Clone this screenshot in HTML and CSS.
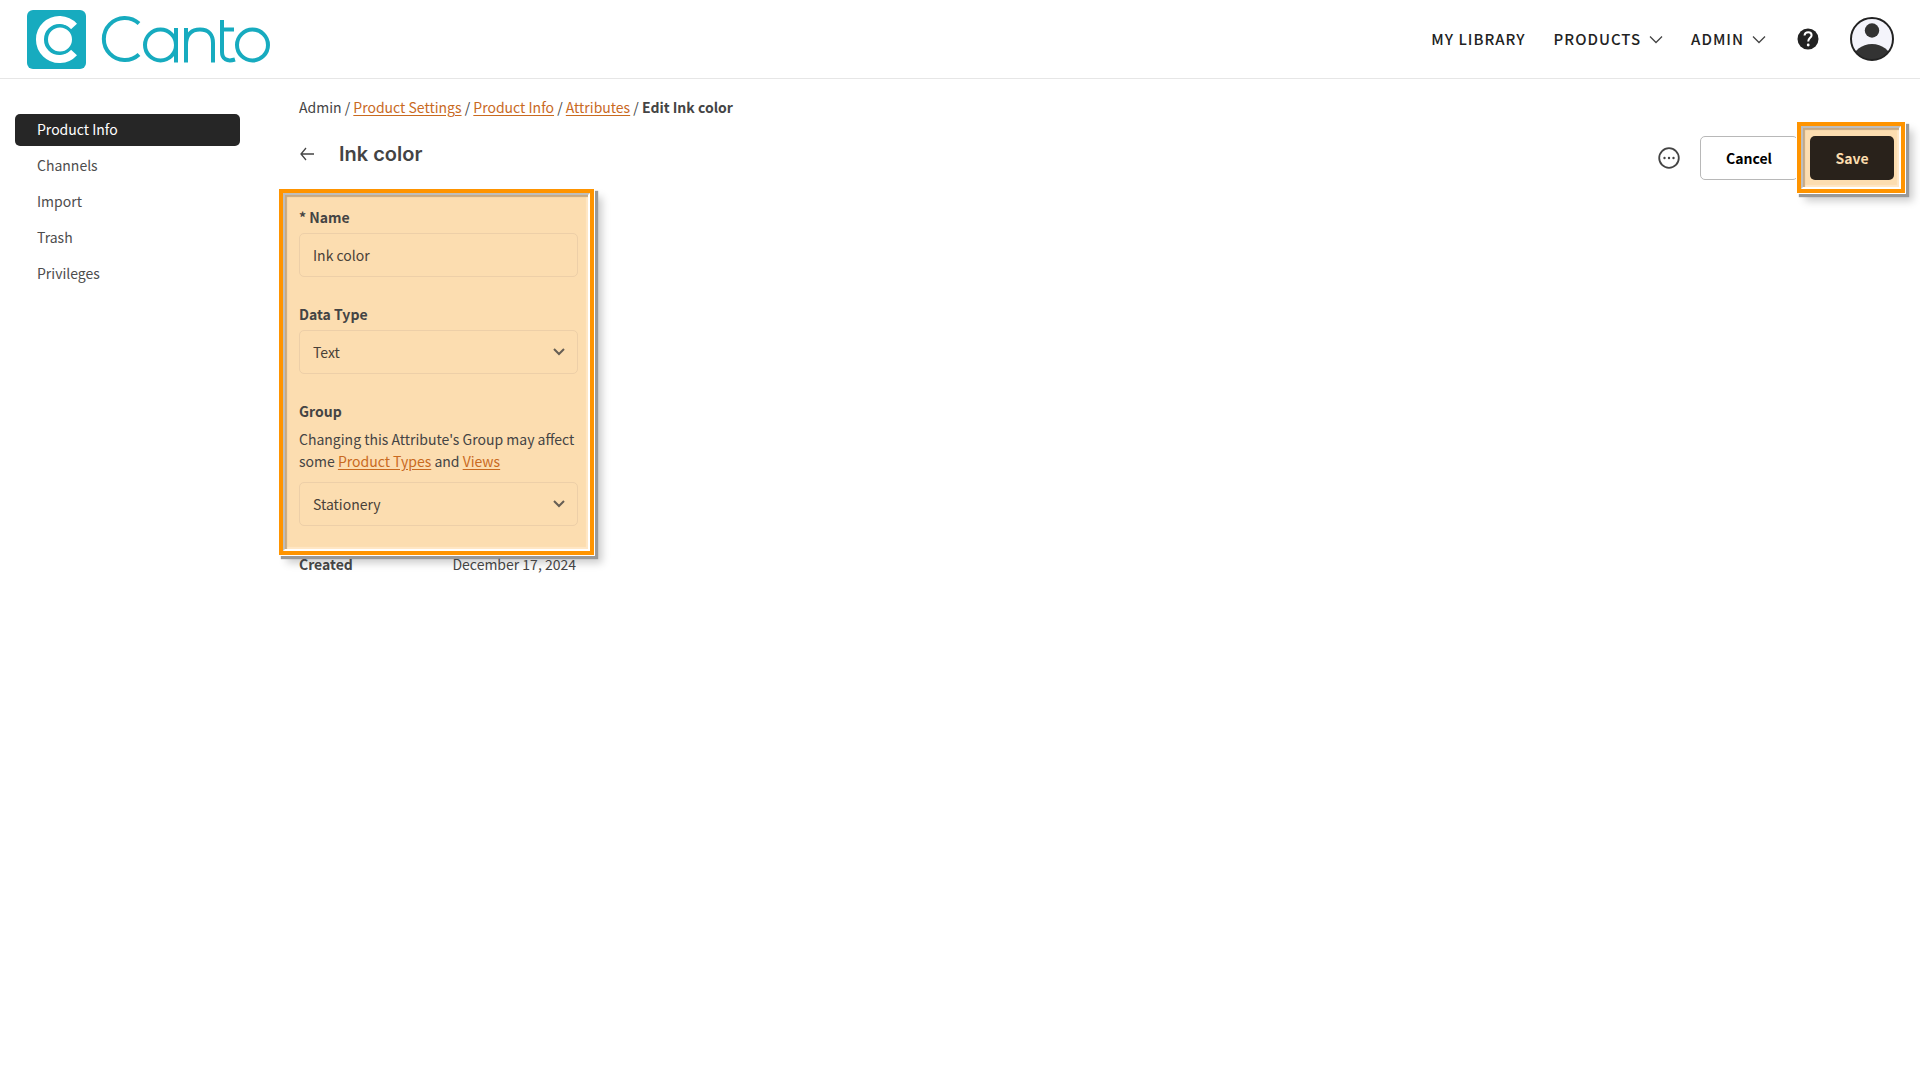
FILE: index.html
```html
<!DOCTYPE html>
<html lang="en">
<head>
<meta charset="utf-8">
<meta name="viewport" content="width=device-width, initial-scale=1">
<title>Edit Ink color</title>
<link rel="stylesheet" href="styles.css">
</head>
<body>
<header class="topbar">
  <a class="logo" href="#" aria-label="Canto home">
    <svg width="244" height="60" viewBox="26 9 244 60" fill="none" aria-hidden="true">
      <rect x="27" y="10" width="59" height="59" rx="6" fill="#17abbf"/>
      <path d="M74 26.500A19.500 19.500 0 1 0 74 52.500" stroke="#fff" stroke-width="8"/>
      <circle cx="60" cy="39.500" r="13.500" fill="#fff" stroke="#17abbf" stroke-width="3"/>
      <g stroke="#17abbf" stroke-width="4">
        <path d="M139 23.500A21 21 0 1 0 139 54.500"/>
        <circle cx="160.500" cy="45" r="15.500"/>
        <path d="M176 28V62.500M186 62.500V28M186 45C186 34 192 29.500 200 29.500C209 29.500 213 35 213 43V62.500M222 20V52C222 59 227 62 235 59.500M222 29.500H234"/>
        <circle cx="252.500" cy="45" r="15.500"/>
      </g>
    </svg>
  </a>
  <nav class="topnav" aria-label="Main">
    <a href="#">MY LIBRARY</a>
    <a href="#">PRODUCTS <svg width="14" height="9" viewBox="0 0 14 9" aria-hidden="true"><path d="M1 1.500L7 7.500L13 1.500"/></svg></a>
    <a href="#">ADMIN <svg width="14" height="9" viewBox="0 0 14 9" aria-hidden="true"><path d="M1 1.500L7 7.500L13 1.500"/></svg></a>
  </nav>
  <button class="icon-button help" type="button" aria-label="Help">
    <svg width="22" height="22" viewBox="0 0 22 22" fill="none" aria-hidden="true">
      <circle cx="11" cy="11" r="10.500" fill="#222"/>
      <path d="M7.500 7.500C7.800 5 9.300 4.200 11.200 4.200C13.300 4.200 14.600 5.400 14.600 7.200C14.600 9.800 11.200 10 11.200 13.500" stroke="#fff" stroke-width="2"/>
      <circle cx="11.200" cy="17" r="1.400" fill="#fff"/>
    </svg>
  </button>
  <button class="icon-button" type="button" aria-label="Account">
    <svg width="44" height="44" viewBox="0 0 44 44" aria-hidden="true">
      <clipPath id="face"><circle cx="22" cy="22" r="21"/></clipPath>
      <circle cx="22" cy="22" r="21" fill="#f4f4fb"/>
      <g clip-path="url(#face)" fill="#333"><circle cx="22" cy="13.500" r="7.200"/><ellipse cx="22" cy="42" rx="19" ry="15"/></g>
      <circle cx="22" cy="22" r="21" fill="none" stroke="#222" stroke-width="2"/>
    </svg>
  </button>
</header>
<div class="layout">
  <nav class="sidebar" aria-label="Settings">
    <a class="active" href="#" aria-current="page">Product Info</a>
    <a href="#">Channels</a>
    <a href="#">Import</a>
    <a href="#">Trash</a>
    <a href="#">Privileges</a>
  </nav>
  <main class="content">
    <nav class="breadcrumb" aria-label="Breadcrumb">Admin / <a href="#">Product Settings</a> / <a href="#">Product Info</a> / <a href="#">Attributes</a> / <strong>Edit Ink color</strong></nav>
    <div class="page-head">
      <a class="back" href="#" aria-label="Back"><svg width="16" height="14" viewBox="0 0 16 14" aria-hidden="true"><path d="M15 7H2M7 1L2 7L7 13"/></svg></a>
      <h1>Ink color</h1>
      <div class="actions">
        <button class="icon-button" type="button" aria-label="More options">
          <svg width="22" height="22" viewBox="0 0 22 22" aria-hidden="true"><circle cx="11" cy="11" r="9.800" fill="none" stroke="#444" stroke-width="1.800"/><g fill="#444"><circle cx="6.500" cy="11" r="1.200"/><circle cx="11" cy="11" r="1.200"/><circle cx="15.500" cy="11" r="1.200"/></g></svg>
        </button>
        <button class="button cancel" type="button">Cancel</button>
        <div class="highlight save-frame"><div class="bevel"><button class="button save" type="submit" form="attribute">Save</button></div></div>
      </div>
    </div>
    <div class="highlight form-frame">
      <form class="bevel" id="attribute">
        <div class="field">
          <label for="name">* Name</label>
          <input class="control" id="name" type="text" value="Ink color">
        </div>
        <div class="field">
          <label for="type">Data Type</label>
          <div class="select"><select class="control" id="type"><option>Text</option></select><svg width="12" height="8" viewBox="0 0 12 8" aria-hidden="true"><path d="M1 1L6 6L11 1"/></svg></div>
        </div>
        <div class="field">
          <label for="group">Group</label>
          <p>Changing this Attribute's Group may affect some <a href="#">Product Types</a> and <a href="#">Views</a></p>
          <div class="select"><select class="control" id="group"><option>Stationery</option></select><svg width="12" height="8" viewBox="0 0 12 8" aria-hidden="true"><path d="M1 1L6 6L11 1"/></svg></div>
        </div>
      </form>
    </div>
    <dl class="meta"><dt>Created</dt><dd>December 17, 2024</dd></dl>
  </main>
</div>
</body>
</html>
```
FILE: styles.css
```css
* { box-sizing: border-box; }
body {
  margin: 0;
  background: #fff;
  color: #444;
  font: 14px/22px "Noto Sans CJK SC", "Open Sans", sans-serif;
}
a { color: #c96a1f; text-underline-offset: 2px; }
svg { display: block; }
button, input, select { font: inherit; }
.topbar {
  display: flex;
  align-items: center;
  height: 79px;
  padding: 0 26px;
  border-bottom: 1px solid #e6e6e6;
}
.topnav {
  display: flex;
  gap: 28px;
  margin-left: auto;
  font-size: 15px;
  font-weight: 500;
  letter-spacing: 1px;
}
.topnav a {
  display: flex;
  align-items: center;
  gap: 8px;
  color: #222;
  text-decoration: none;
}
.topnav path, .back path { fill: none; stroke: #444; stroke-width: 1.300; }
.icon-button { padding: 0; border: 0; background: none; }
.help { margin: 0 31px; }
.layout { display: flex; }
.sidebar {
  display: flex;
  flex-direction: column;
  gap: 4px;
  width: 240px;
  padding: 35px 0 0 15px;
}
.sidebar a {
  padding: 4px 22px 6px;
  border-radius: 5px;
  color: #4d4d4d;
  text-decoration: none;
}
.sidebar .active { background: #262626; color: #fff; }
.content { flex: 1; padding: 17px 15px 0 59px; }
.page-head { display: flex; align-items: flex-start; margin-top: 4px; }
.back { padding: 25px 0; }
h1 {
  margin: 18px 0 0 24px;
  font: 600 20px/28px Inter, sans-serif;
}
.actions { display: flex; align-items: center; margin-left: auto; }
.highlight {
  position: relative;
  border: 4px solid #ff9400;
  background: #fcddb0;
  box-shadow: 0 0 0 1px #fff, 3px 3px 1px 1px #999, 8px 8px 8px #ccc;
}
.bevel {
  border: 2px solid;
  border-color: #bebebe #fff #fff #bebebe;
  box-shadow: inset 2px 2px 1px #c6a984, inset -2px -2px 1px #ffe7c6;
}
.button {
  height: 44px;
  border-radius: 5px;
  font-weight: 700;
}
.cancel {
  width: 98px;
  margin-left: 20px;
  border: 1px solid #b8b8b8;
  background: #fff;
  color: #000;
}
.save-frame { margin-left: -1px; }
.save-frame .bevel { padding: 8px 5px 7px 7px; }
.save { width: 84px; border: 0; background: #29221b; color: #fbdcae; }
.form-frame { width: 315px; margin: -4px 0 0 -20px; }
.form-frame .bevel {
  display: flex;
  flex-direction: column;
  gap: 26px;
  padding: 11px 10px 23px 14px;
}
.field label { display: block; font-weight: 700; }
.field p { margin: 6px 0 10px; }
.control {
  display: block;
  width: 100%;
  height: 44px;
  padding: 0 13px;
  border: 1px solid #edcfa8;
  border-radius: 5px;
  background: transparent;
  color: #494138;
  appearance: none;
}
label + .control, label + .select { margin-top: 5px; }
.select { display: grid; align-items: center; }
.select > * { grid-area: 1 / 1; }
.select svg { justify-self: end; margin-right: 13px; pointer-events: none; }
.select path { fill: none; stroke: #665e54; stroke-width: 2; }
.meta {
  position: relative;
  display: flex;
  justify-content: space-between;
  width: 277px;
  margin: -2px 0 0;
}
.meta dt { font-weight: 700; }
.meta dd { margin: 0; }
```
